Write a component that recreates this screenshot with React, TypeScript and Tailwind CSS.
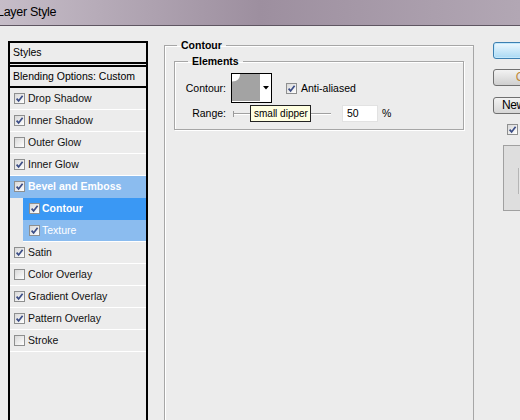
import React from "react";

interface StyleRow {
  name: string;
  on: boolean;
  kind?: "parent" | "active" | "sub";
}

const styleRows: StyleRow[] = [
  { name: "Drop Shadow", on: true },
  { name: "Inner Shadow", on: true },
  { name: "Outer Glow", on: false },
  { name: "Inner Glow", on: true },
  { name: "Bevel and Emboss", on: true, kind: "parent" },
  { name: "Contour", on: true, kind: "active" },
  { name: "Texture", on: true, kind: "sub" },
  { name: "Satin", on: true },
  { name: "Color Overlay", on: false },
  { name: "Gradient Overlay", on: true },
  { name: "Pattern Overlay", on: true },
  { name: "Stroke", on: false },
];

function Check({ checked }: { checked: boolean }) {
  return (
    <span className="flex h-[11px] w-[11px] shrink-0 items-center justify-center border border-[#8e8f8f] bg-linear-to-br from-[#d8d8d8] to-white">
      {checked && (
        <svg viewBox="0 0 9 9" className="h-[9px] w-[9px]">
          <path d="M1.6 4.6 L3.6 6.9 L7.6 1.7" fill="none" stroke="#3b4d86" strokeWidth="1.7" />
        </svg>
      )}
    </span>
  );
}

function StyleItem({ row }: { row: StyleRow }) {
  if (row.kind === "parent") {
    return (
      <div className="flex h-[22px] items-center gap-[3px] border-b border-[#8bbcef] bg-[#8bbcef] pl-[4px] font-bold text-white">
        <Check checked={row.on} />
        <span>{row.name}</span>
      </div>
    );
  }
  if (row.kind === "active") {
    return (
      <div className="ml-[13px] flex h-[22px] items-center gap-[2px] border-b border-[#3a98f4] bg-[#3a98f4] pl-[6px] font-bold text-white">
        <Check checked={row.on} />
        <span>{row.name}</span>
      </div>
    );
  }
  if (row.kind === "sub") {
    return (
      <div className="ml-[13px] flex h-[22px] items-center gap-[2px] border-b border-white bg-[#8bbcef] pl-[6px] text-white">
        <Check checked={row.on} />
        <span>{row.name}</span>
      </div>
    );
  }
  return (
    <div className="flex h-[22px] items-center gap-[3px] border-b border-white pl-[4px] text-[#111]">
      <Check checked={row.on} />
      <span>{row.name}</span>
    </div>
  );
}

function ContourThumb() {
  return (
    <div className="flex h-[30px] w-[41px] shrink-0 border border-black bg-white">
      <svg viewBox="0 0 28 28" className="h-[28px] w-[28px]">
        <rect x="0" y="0" width="28" height="27" fill="#a3a3a3" />
        <path d="M0 0 H8 C8 4.5 5.5 7.5 0 7.5 Z" fill="#ffffff" />
      </svg>
      <div className="flex flex-1 items-center justify-center">
        <svg viewBox="0 0 6 4" className="h-[4px] w-[6px]">
          <path d="M0 0 H6 L3 3.5 Z" fill="#000" />
        </svg>
      </div>
    </div>
  );
}

export default function App() {
  return (
    <div
      className="h-[420px] w-[520px] overflow-hidden bg-[#ececec] text-[10.5px] leading-[13px] text-black"
      style={{ fontFamily: '"Liberation Sans", Arial, sans-serif' }}
    >
      {/* Title bar */}
      <div className="flex h-[26px] items-center border-b border-[#5f5662] bg-linear-to-r from-[#c6bdc8] via-[#9d8f9f] to-[#b2a7b4]">
        <span className="ml-[-3px] text-[12.5px] tracking-[-0.3px] text-black">Layer Style</span>
      </div>

      <div className="flex pl-[8px] pt-[13px]">
        {/* Styles list */}
        <div className="mt-[2px] h-[400px] w-[140px] shrink-0 border-2 border-black">
          <div className="flex h-[21px] items-center border-b-2 border-black pl-[3px]">Styles</div>
          <div className="mt-[1px] flex h-[23px] items-center border-y-2 border-t-black border-b-black pl-[3px]">
            Blending Options: Custom
          </div>
          {styleRows.map((row) => (
            <StyleItem key={row.name} row={row} />
          ))}
        </div>

        {/* Contour panel */}
        <fieldset className="ml-[16px] h-[420px] w-[310px] shrink-0 border border-[#a6a6a6] px-[9px] shadow-[inset_1px_1px_0_#fff]">
          <legend className="ml-[3px] px-[4px] font-bold">Contour</legend>
          <fieldset className="mt-[3px] border border-[#a6a6a6] pb-[6px] pl-[9px] pt-[5px] shadow-[1px_1px_0_#fff,inset_1px_1px_0_#fff]">
            <legend className="ml-[4px] px-[4px] font-bold">Elements</legend>
            <div className="flex h-[30px] items-center">
              <span className="w-[42px] text-right">Contour:</span>
              <div className="ml-[5px]">
                <ContourThumb />
              </div>
              <div className="ml-[14px] flex items-center gap-[4px]">
                <Check checked />
                <span>Anti-aliased</span>
              </div>
            </div>
            <div className="relative mt-[1px] flex h-[19px] items-center">
              <span className="w-[42px] text-right">Range:</span>
              <div className="ml-[7px] flex w-[98px] items-center">
                <div className="h-[6px] w-[1px] bg-[#9a9a9a]" />
                <div className="h-[2px] flex-1 border-t border-[#a0a0a0] border-b-white bg-white" />
              </div>
              <div className="ml-[11px] flex h-[17px] w-[36px] items-center border border-[#e2e2e2] bg-white pl-[4px]">50</div>
              <span className="ml-[4px]">%</span>
              <div className="absolute left-[66px] top-[1px] flex h-[17px] w-[61px] items-center whitespace-nowrap border border-[#222] bg-[#ffffe1] pl-[3px] text-[10px]">
                small dipper
              </div>
            </div>
          </fieldset>
        </fieldset>

        {/* Buttons */}
        <div className="ml-[19px] flex w-[90px] shrink-0 flex-col pt-[3px]">
          <button className="h-[17px] w-[83px] rounded-[3px] border border-[#3c7fb1] bg-linear-to-b from-[#eef8fe] to-[#a9d9f4] text-[12px] shadow-[inset_0_0_0_1px_#c2e8fc]">
            OK
          </button>
          <button className="mt-[10px] h-[17px] w-[83px] rounded-[3px] border border-[#707070] bg-linear-to-b from-[#f3f3f3] to-[#cfcfcf] text-[12px] text-[#c08a3a]">
            Cancel
          </button>
          <button className="mt-[11px] flex h-[17px] w-[83px] items-center justify-start rounded-[3px] border border-[#707070] bg-linear-to-b from-[#f3f3f3] to-[#d6d6d6] pl-[8px] text-[12px] tracking-[-0.4px]">
            New Style...
          </button>
          <div className="ml-[14px] mt-[9px] flex items-center gap-[4px]">
            <Check checked />
            <span>Preview</span>
          </div>
          <div className="ml-[10px] mt-[9px] h-[66px] w-[70px] border border-[#a0a0a0] bg-[#dedede] pl-[14px] pt-[22px]">
            <div className="h-[26px] w-[30px] border-l border-[#b5b5b5] bg-[#e4e4e4]" />
          </div>
        </div>
      </div>
    </div>
  );
}
